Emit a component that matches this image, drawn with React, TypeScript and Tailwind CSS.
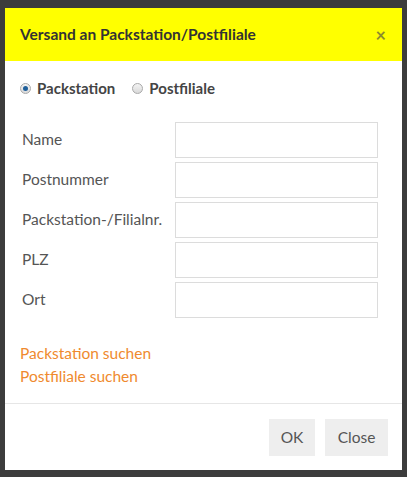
const fields = ['Name', 'Postnummer', 'Packstation-/Filialnr.', 'PLZ', 'Ort'];

const Radio = ({ checked }: { checked?: boolean }) => (
  <span className="w-[11px] h-[11px] rounded-full border border-[#a9a9a9] bg-gradient-to-b from-[#f4f4f4] to-[#d9d9d9] flex items-center justify-center shrink-0">
    {checked && <span className="w-[5px] h-[5px] rounded-full bg-[#1f5f9a]" />}
  </span>
);

export default function App() {
  return (
    <div className="w-[407px] h-[477px] bg-[#3c3c3c] pt-[8px] pl-[5px] overflow-hidden font-['Lato',sans-serif]">
      <div className="w-[397px] h-[462px] bg-white flex flex-col">
        <div className="h-[53px] bg-[#ffff00] pl-[15px] pr-[16px] flex items-center justify-between shrink-0">
          <h4 className="text-[15.5px] font-bold text-[#333]">Versand an Packstation/Postfiliale</h4>
          <span className="text-[18px] leading-none text-[#8c8c2e] font-bold">×</span>
        </div>

        <div className="px-[15px] pt-[18px] flex-1">
          <div className="flex items-center text-[15px] font-bold text-[#444] h-[18px]">
            <label className="flex items-center gap-[6px]">
              <Radio checked />
              <span>Packstation</span>
            </label>
            <label className="flex items-center gap-[6px] ml-[17px]">
              <Radio />
              <span>Postfiliale</span>
            </label>
          </div>

          <div className="mt-[25px] flex flex-col gap-[4px]">
            {fields.map((f) => (
              <div key={f} className="flex items-center h-[36px]">
                <span className="pl-[2px] w-[155px] text-[15.5px] text-[#555]">{f}</span>
                <input
                  type="text"
                  className="w-[203px] h-[36px] border border-[#dcdcdc] bg-white outline-none"
                />
              </div>
            ))}
          </div>

          <div className="mt-[24px] flex flex-col text-[15.5px] text-[#ef8a2e] leading-[23px]">
            <a href="#">Packstation suchen</a>
            <a href="#">Postfiliale suchen</a>
          </div>
        </div>

        <div className="border-t border-[#e6e6e6] h-[67px] flex items-start justify-end gap-[10px] pr-[14px] pt-[15px] shrink-0">
          <button className="h-[37px] w-[46px] bg-[#eeeeee] text-[15.5px] text-[#555]">OK</button>
          <button className="h-[37px] w-[63px] bg-[#eeeeee] text-[15.5px] text-[#555]">Close</button>
        </div>
      </div>
    </div>
  );
}
